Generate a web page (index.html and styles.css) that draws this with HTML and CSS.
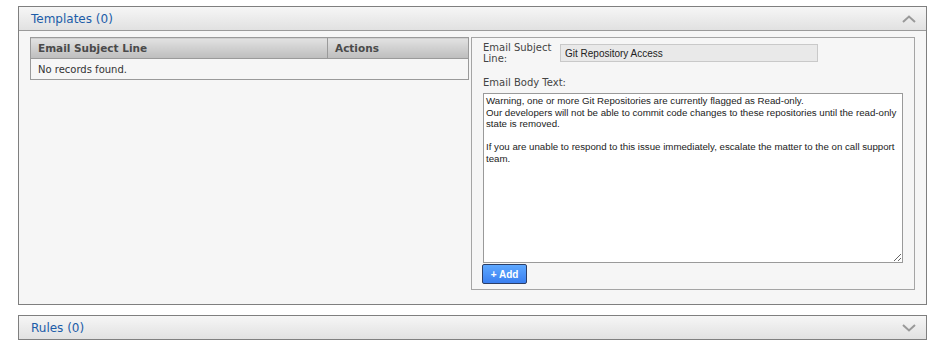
FILE: index.html
```html
<!DOCTYPE html>
<html lang="en">
  <head>
    <meta charset="UTF-8" />
    <title>Templates</title>
    <link rel="stylesheet" href="styles.css">
  </head>
  <body>
    <div class="page">
      <div class="panel">
        <div class="panel-head">
          <span class="panel-title">Templates (0)</span>
          <svg class="chev" width="14" height="8" viewBox="0 0 14 8"><path d="M1 7 L7 1.5 L13 7" fill="none" stroke="#999" stroke-width="2"/></svg>
        </div>
        <div class="panel-body">
          <table class="grid">
            <thead>
              <tr>
                <th class="col-subject">Email Subject Line</th>
                <th>Actions</th>
              </tr>
            </thead>
            <tbody>
              <tr>
                <td colspan="2">No records found.</td>
              </tr>
            </tbody>
          </table>

          <div class="form">
            <div class="field-row">
              <label class="label">Email Subject<br>Line:</label>
              <input class="input" type="text" value="Git Repository Access" />
            </div>
            <div class="label body-label">Email Body Text:</div>
            <textarea class="body-text">Warning, one or more Git Repositories are currently flagged as Read-only.
Our developers will not be able to commit code changes to these repositories until the read-only state is removed.

If you are unable to respond to this issue immediately, escalate the matter to the on call support team.</textarea>
            <button class="btn-add">+ Add</button>
          </div>
        </div>
      </div>

      <div class="panel collapsed">
        <div class="panel-head">
          <span class="panel-title">Rules (0)</span>
          <svg class="chev" width="14" height="8" viewBox="0 0 14 8"><path d="M1 1 L7 6.5 L13 1" fill="none" stroke="#999" stroke-width="2"/></svg>
        </div>
      </div>
    </div>
  </body>
</html>
```

FILE: styles.css
```css
* {
  box-sizing: border-box;
}

html,
body {
  margin: 0;
  background-color: #fff;
  font-family: "DejaVu Sans", Verdana, sans-serif;
  font-size: 10px;
  color: #333;
}

.page {
  display: flex;
  flex-direction: column;
  gap: 10px;
  padding: 6px 23px 0 18px;
}

.panel {
  border: 1px solid #7f7f7f;
  background-color: #f6f6f6;
}

.panel-head {
  display: flex;
  align-items: center;
  justify-content: space-between;
  height: 24px;
  padding: 0 10px 0 12px;
  background: linear-gradient(#f6f6f6, #e1e1e1);
  border-bottom: 1px solid #9a9a9a;
}

.collapsed .panel-head {
  height: 23px;
  border-bottom: none;
}

.panel-title {
  font-size: 12px;
  color: #1c5ca8;
}

.panel-body {
  display: grid;
  grid-template-columns: 439px 444px;
  gap: 2px;
  align-items: start;
  padding: 6px 12px 14px 11px;
}

.grid {
  width: 100%;
  border-collapse: collapse;
  border: 1px solid #9a9a9a;
}

.grid th {
  height: 21px;
  padding: 0 7px;
  text-align: left;
  font-size: 10.5px;
  font-weight: bold;
  color: #4a4a4a;
  background: linear-gradient(#e2e2e2, #bdbdbd);
  border-bottom: 1px solid #9a9a9a;
  border-left: 1px solid #9a9a9a;
}

.grid th.col-subject {
  width: 297px;
  border-left: none;
}

.grid td {
  height: 21px;
  padding: 0 7px;
  color: #333;
}

.form {
  display: flex;
  flex-direction: column;
  align-items: flex-start;
  border: 1px solid #a5a5a5;
  padding: 4px 12px 5px 11px;
}

.field-row {
  display: flex;
  align-items: flex-start;
}

.label {
  font-size: 10px;
  line-height: 11px;
  color: #444;
}

.field-row .label {
  width: 77px;
}

.input {
  width: 258px;
  height: 18px;
  margin-top: 2px;
  padding: 0 4px;
  border: 1px solid #c9c9c9;
  background-color: #e9e9e9;
  font-family: "Liberation Sans", Arial, sans-serif;
  font-size: 10px;
  color: #222;
}

.body-label {
  margin-top: 13px;
}

.body-text {
  width: 420px;
  height: 170px;
  margin-top: 5px;
  padding: 1px 2px;
  border: 1px solid #9a9a9a;
  background-color: #fff;
  font-family: "Liberation Sans", Arial, sans-serif;
  font-size: 9.7px;
  line-height: 11.6px;
  color: #222;
}

.btn-add {
  width: 45px;
  height: 20px;
  margin: 1px 0 0 -1px;
  padding: 0;
  border: 1px solid #2c3e66;
  border-radius: 2px;
  background: linear-gradient(#5ea8ff, #3a7ff0);
  font-family: "Liberation Sans", Arial, sans-serif;
  font-size: 10px;
  font-weight: bold;
  color: #fff;
}
```
